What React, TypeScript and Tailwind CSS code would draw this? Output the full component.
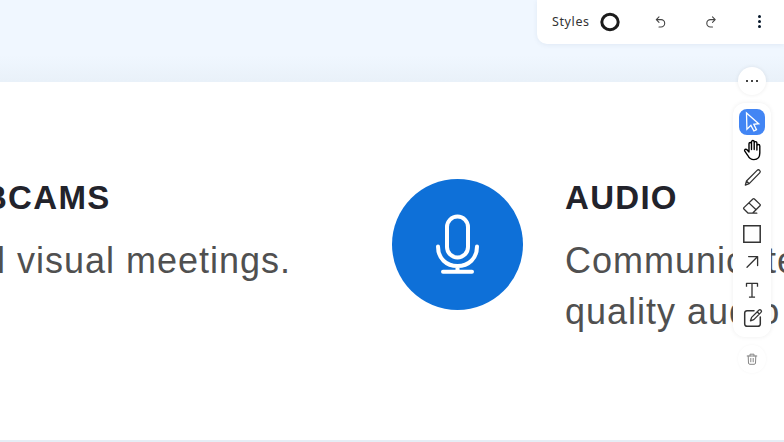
import type { ReactNode } from "react";

function Icon({ size = 20, children, className = "" }: { size?: number; children: ReactNode; className?: string }) {
  return (
    <svg
      width={size}
      height={size}
      viewBox={`0 0 ${size} ${size}`}
      fill="none"
      stroke="currentColor"
      strokeWidth="1.3"
      strokeLinecap="round"
      strokeLinejoin="round"
      className={`overflow-visible ${className}`}
    >
      {children}
    </svg>
  );
}

function Tool({ label, active = false, children }: { label: string; active?: boolean; children: ReactNode }) {
  return (
    <button
      aria-label={label}
      className={`flex h-[26px] w-[26px] items-center justify-center rounded-lg ${active ? "bg-[#4285f4] text-white" : "text-[#333]"}`}
    >
      {children}
    </button>
  );
}

function TopBar() {
  return (
    <div className="absolute top-0 right-0 flex h-11 w-[247px] items-center rounded-bl-[10px] bg-white shadow-[0_1px_5px_rgba(40,70,110,0.08)]">
      <span className="ml-[15px] w-[48px] font-['Noto_Sans',sans-serif] text-[12.5px] leading-4 tracking-[0.6px] text-[#333]">Styles</span>
      <svg width="20" height="20" viewBox="0 0 20 20" className="-mt-px" fill="none" aria-label="Stroke style">
        <ellipse cx="10" cy="10" rx="8.2" ry="7.7" stroke="#1b1b1b" strokeWidth="3" />
      </svg>
      <button aria-label="Undo" className="ml-[35px] text-[#444]">
        <Icon size={12}>
          <path d="M4 .9 1.3 3.6 4 6.3M1.3 3.6H6a3.7 3.7 0 0 1 0 7.4H4" strokeWidth="1.1" />
        </Icon>
      </button>
      <button aria-label="Redo" className="ml-[38px] text-[#444]">
        <Icon size={12}>
          <path d="M7.5.9 10.2 3.6 7.5 6.3M10.2 3.6H5.5a3.7 3.7 0 0 0 0 7.4h2" strokeWidth="1.1" />
        </Icon>
      </button>
      <button aria-label="More" className="-mt-px ml-[41px] flex flex-col gap-[2px]">
        <i className="h-[3px] w-[3px] rounded-full bg-[#06172a]" />
        <i className="h-[3px] w-[3px] rounded-full bg-[#06172a]" />
        <i className="h-[3px] w-[3px] rounded-full bg-[#06172a]" />
      </button>
    </div>
  );
}

function SideTools() {
  return (
    <div className="absolute top-[67px] right-[13px] flex w-[38px] flex-col items-center">
      <button aria-label="Options" className="flex h-7 w-7 items-center justify-center gap-[3px] rounded-full bg-white shadow-[0_0_4px_rgba(0,0,0,0.08)]">
        <i className="h-[2px] w-[2px] bg-[#444]" />
        <i className="h-[2px] w-[2px] bg-[#444]" />
        <i className="h-[2px] w-[2px] bg-[#444]" />
      </button>
      <div className="mt-2 flex h-[234px] w-[38px] flex-col items-center gap-[2px] rounded-xl bg-white pt-[6px] shadow-[0_0_5px_rgba(0,0,0,0.07)]">
        <Tool label="Select" active>
          <Icon>
            <path d="m4.5 1 .4 16.2 4-3.8 3 5.6 2.6-1.3-2.7-5.4 4.9-.6Z" strokeLinejoin="miter" />
          </Icon>
        </Tool>
        <Tool label="Hand">
          <Icon className="text-black">
            <path d="M7 12V3.8a1.25 1.25 0 0 1 2.5 0V9.5M9.5 9V1.9a1.35 1.35 0 0 1 2.7 0V9.5M12.2 9V3a1.35 1.35 0 0 1 2.7 0V10M14.9 9.5V6a1.4 1.4 0 0 1 2.9 0V13c0 4.3-2.1 6.6-5.9 6.6-3.3 0-4.8-1.4-6.2-4.3l-2.9-4.1c-.9-1.6 1-2.7 2.2-1.4L7 12" strokeWidth="1.4" />
          </Icon>
        </Tool>
        <Tool label="Draw">
          <Icon>
            <path d="m3.3 17.1 1.2-4.1L15.1 2.4a1.75 1.75 0 0 1 2.6 2.5L7.2 15.6 3.3 17.1Zm1.2-4.1 2.7 2.6" />
          </Icon>
        </Tool>
        <Tool label="Eraser">
          <Icon>
            <path d="M6.2 17.2 1.9 13q-.7-.7 0-1.4l9-8.6q.8-.7 1.5 0l5.6 5.4q.7.7 0 1.4l-7.5 7.4H6.2ZM6.9 6.9l7.2 6.9M6.2 17.2h8.6" />
          </Icon>
        </Tool>
        <Tool label="Rectangle">
          <Icon>
            <path d="M1.8 1.8h16.4v16.4H1.8Z" strokeWidth="1.5" strokeLinejoin="miter" />
          </Icon>
        </Tool>
        <Tool label="Arrow">
          <Icon>
            <path d="M5 15.2 15.4 4.8M6.6 4.6H15.6V13.5" />
          </Icon>
        </Tool>
        <Tool label="Text">
          <Icon>
            <path d="M4.5 6V3.3h11V6M10 3.3v13.8M7.6 17.1h4.8" strokeLinecap="square" />
          </Icon>
        </Tool>
        <Tool label="Note">
          <Icon>
            <path d="M12 2.7H5A2.3 2.3 0 0 0 2.7 5v11A2.3 2.3 0 0 0 5 18.3h11a2.3 2.3 0 0 0 2.3-2.3V9" strokeWidth="1.5" />
            <path d="m8.5 12.8 1.1-3.4 7.2-7.2a1.5 1.5 0 0 1 2.2 2.2l-7.2 7.2-3.3 1.2ZM15.2 3.8l2.1 2.2" strokeWidth="1.3" />
          </Icon>
        </Tool>
      </div>
      <button aria-label="Delete" className="mt-2 flex h-7 w-7 items-center justify-center rounded-full bg-white text-[#858585] shadow-[0_0_3px_rgba(0,0,0,0.04)]">
        <Icon size={12}>
          <path d="M1.2 3h9.6M4 3V1.2h4V3M2.2 3l.3 7q.1 1.3 1.3 1.3h4.4q1.2 0 1.3-1.3l.3-7M4.8 5.4v3.4M7.2 5.4v3.4" strokeWidth="1" />
        </Icon>
      </button>
    </div>
  );
}

export default function App() {
  return (
    <main className="relative flex h-[442px] w-[784px] flex-col overflow-hidden bg-white font-['Liberation_Sans',Arial,sans-serif]">
      <div className="h-[81.5px] shrink-0 bg-[linear-gradient(to_bottom,#f0f7ff_0,#f0f7ff_55px,#e9f1f9_81px)]" />
      <section className="flex h-[358.5px] shrink-0 pt-[97.5px]">
        <div className="flex w-[392px] shrink-0 flex-col whitespace-nowrap">
          <div className="flex w-[110.5px] justify-end">
            <h2 className="text-[33px] leading-[38px] font-bold tracking-[1.3px] text-[#22232b]">WEBCAMS</h2>
          </div>
          <div className="mt-[18px] flex w-[291px] justify-end">
            <p className="text-[36px] leading-[51px] tracking-[1px] text-[#505050]">full visual meetings.</p>
          </div>
        </div>
        <div className="flex h-[131px] w-[131px] shrink-0 items-center justify-center rounded-full bg-[#0e70d8]">
          <svg width="44" height="60" viewBox="0 0 44 60" fill="none" stroke="white" strokeWidth="4" strokeLinecap="round" className="overflow-visible">
            <path d="M11 12a10.5 10.5 0 0 1 21 0v20a10.5 10.5 0 0 1-21 0Z" />
            <path d="M2 31.5c0 11.8 8.3 19.6 19.5 19.6S41 43.3 41 31.5M21.5 52v4M7 56.7h29" />
          </svg>
        </div>
        <div className="ml-[42px] shrink-0 whitespace-nowrap">
          <h2 className="text-[33px] leading-[38px] font-bold tracking-[1.3px] text-[#22232b]">AUDIO</h2>
          <p className="mt-[18px] text-[36px] leading-[51px] tracking-[1px] text-[#505050]">
            Communicate
            <br />
            quality audio
          </p>
        </div>
      </section>
      <div className="h-[2px] shrink-0 bg-[#e5edf5]" />
      <TopBar />
      <SideTools />
    </main>
  );
}
